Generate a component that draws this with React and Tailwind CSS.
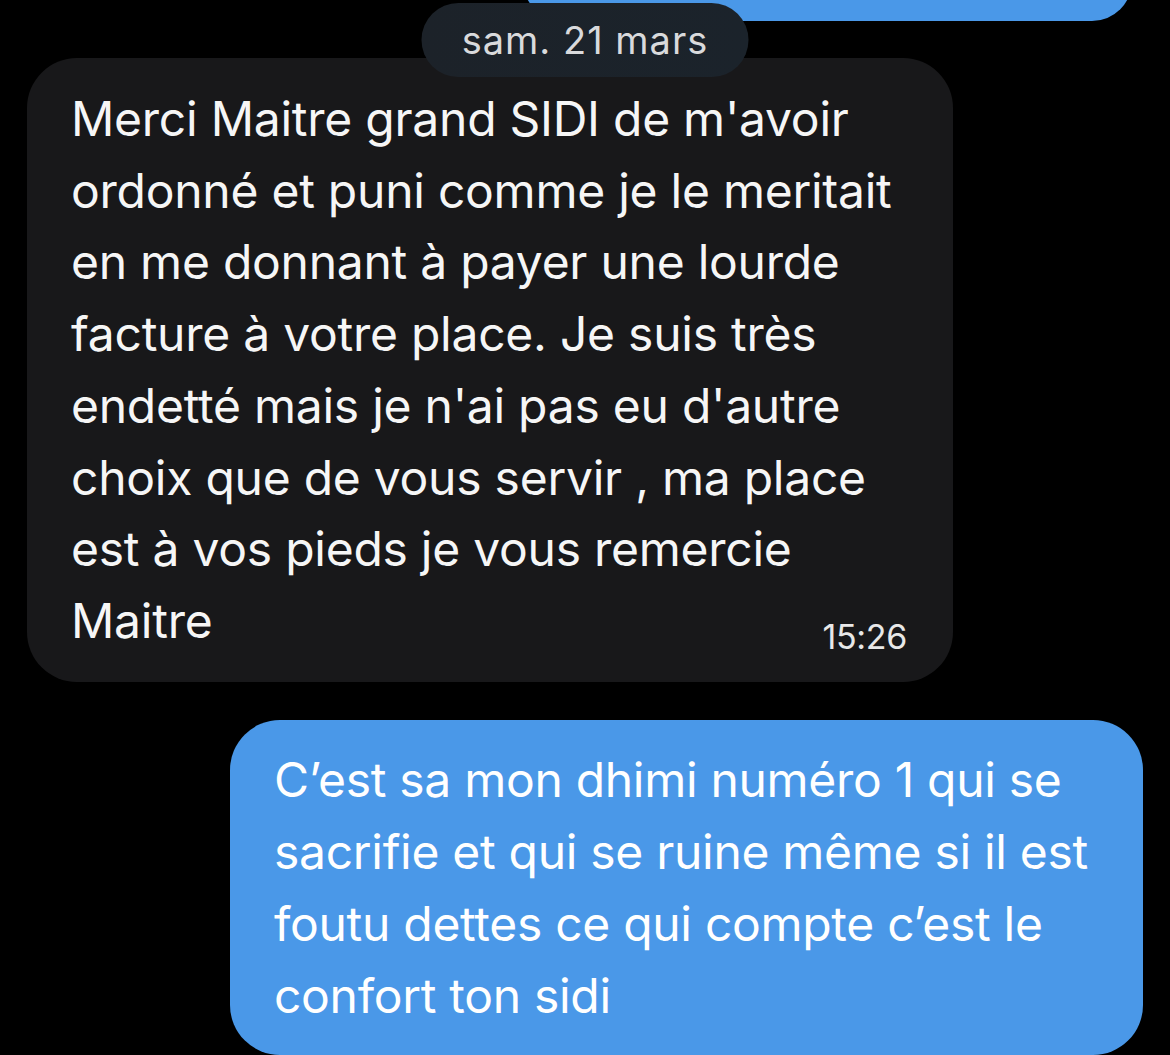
import React from 'react';

const darkLines = [
  "Merci Maitre grand SIDI de m'avoir",
  'ordonné et puni comme je le meritait',
  'en me donnant à payer une lourde',
  'facture à votre place. Je suis très',
  "endetté mais je n'ai pas eu d'autre",
  'choix que de vous servir , ma place',
  'est à vos pieds je vous remercie',
];

const blueLines = [
  'C’est sa mon dhimi numéro 1 qui se',
  'sacrifie et qui se ruine même si il est',
  'foutu dettes ce qui compte c’est le',
  'confort ton sidi',
];

export default function App() {
  return (
    <div className="relative w-[1170px] h-[1055px] overflow-hidden bg-black font-['Inter',sans-serif] text-white">
      {/* date pill over the bubbles */}
      <div className="absolute top-[3px] left-1/2 -translate-x-1/2 z-10 h-[74px] w-[327px] rounded-full bg-gradient-to-r from-[#1c2229] to-[#1b232b] flex items-center justify-center">
        <span className="text-[38px] text-[#d9dadc] tracking-[1px]">sam. 21 mars</span>
      </div>

      <div className="px-[27px]">
        {/* previous outgoing bubble, mostly scrolled away */}
        <div className="ml-auto mr-[11px] w-[609px] h-[80px] -mt-[59px] rounded-[50px] bg-[#4a98e8]" />

        <div className="mt-[37px] w-[926px] rounded-[50px] bg-[#18181a] pl-[44px] pr-[46px] pt-[25px] pb-[25px] text-[48px] leading-[71.7px] tracking-[-0.25px] text-[#f6f6f6]">
          {darkLines.map((l) => (
            <div key={l} className="whitespace-nowrap">{l}</div>
          ))}
          <div className="flex items-end justify-between">
            <span>Maitre</span>
            <span className="text-[34px] leading-none text-[#e8e8e8] tracking-[-0.3px] mb-[3px]">15:26</span>
          </div>
        </div>

        <div className="ml-auto mt-[38px] w-[913px] rounded-[50px] bg-[#4a98e8] pl-[44px] pr-[40px] pt-[24px] pb-[23px] text-[48px] leading-[72px] tracking-[-0.3px]">
          {blueLines.map((l) => (
            <div key={l} className="whitespace-nowrap">{l}</div>
          ))}
        </div>
      </div>
    </div>
  );
}
